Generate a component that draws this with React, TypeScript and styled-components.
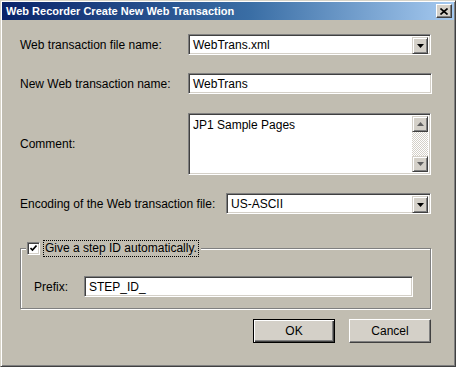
import React from 'react'
import styled, { createGlobalStyle } from 'styled-components'

const Global = createGlobalStyle`
  html, body {
    margin: 0;
    padding: 0;
    background: #c1bdb1;
  }
  * {
    box-sizing: border-box;
  }
`

const Window = styled.div`
  width: 456px;
  height: 367px;
  background: #c1bdb1;
  border: 1px solid;
  border-color: #d8d4c8 #404040 #404040 #d8d4c8;
  box-shadow: inset 1px 1px #ffffff, inset -1px -1px #808080;
  padding: 1px;
  display: flex;
  flex-direction: column;
  font-family: 'Liberation Sans', Arial, sans-serif;
  font-size: 12px;
  color: #000;
`

const TitleBar = styled.div`
  height: 18px;
  display: flex;
  align-items: center;
  justify-content: space-between;
  padding: 0 2px 0 4px;
  background: linear-gradient(to right, #0a246a 0%, #3a6ea5 55%, #a6caf0 100%);
`

const Title = styled.span`
  color: #ffffff;
  font-weight: bold;
  font-size: 11px;
  white-space: nowrap;
`

const CloseButton = styled.div`
  width: 16px;
  height: 14px;
  background: #d4d0c8;
  border: 1px solid;
  border-color: #ffffff #404040 #404040 #ffffff;
  box-shadow: inset -1px -1px #808080;
  display: flex;
  align-items: center;
  justify-content: center;
`

const Body = styled.div`
  flex: 1;
  display: flex;
  flex-direction: column;
  padding: 14px 23px 0 18px;
`

const Row = styled.div<{ $top: number }>`
  display: flex;
  align-items: center;
  margin-top: ${(p) => p.$top}px;
`

const Label = styled.label<{ $width: number }>`
  width: ${(p) => p.$width}px;
  flex-shrink: 0;
  white-space: nowrap;
`

const Sunken = styled.div<{ $height: number }>`
  flex: 1;
  height: ${(p) => p.$height}px;
  background: #ffffff;
  border: 1px solid;
  border-color: #808080 #ffffff #ffffff #808080;
  box-shadow: inset 1px 1px #404040, inset -1px -1px #d4d0c8;
  padding: 2px;
  display: flex;
`

const FieldText = styled.div<{ $top?: number }>`
  flex: 1;
  padding: ${(p) => p.$top ?? 1}px 1px 0 2px;
  white-space: nowrap;
  line-height: 14px;
`

const RaisedButton = styled.div`
  width: 16px;
  height: 17px;
  background: #d4d0c8;
  border: 1px solid;
  border-color: #d4d0c8 #404040 #404040 #d4d0c8;
  box-shadow: inset 1px 1px #ffffff, inset -1px -1px #808080;
  display: flex;
  align-items: center;
  justify-content: center;
`

const ScrollBar = styled.div`
  width: 16px;
  display: flex;
  flex-direction: column;
`

const ScrollTrack = styled.div`
  flex: 1;
  background: repeating-conic-gradient(#ffffff 0 25%, #d4d0c8 0 50%) 0 0 / 2px 2px;
`

const ScrollArrow = styled(RaisedButton)`
  height: 16px;
`

const Group = styled.fieldset`
  margin: 26px 0 0 0;
  min-width: 0;
  border: 1px solid #808080;
  box-shadow: inset 1px 1px #ffffff, 1px 1px #ffffff;
  padding: 19px 17px 11px 13px;
  display: flex;
  align-items: center;
`

const Legend = styled.legend`
  margin-left: -8px;
  padding: 0 2px 0 1px;
  background: #c1bdb1;
  display: flex;
  align-items: center;
  gap: 3px;
`

const CheckBox = styled.div`
  width: 13px;
  height: 13px;
  background: #ffffff;
  border: 1px solid;
  border-color: #808080 #ffffff #ffffff #808080;
  box-shadow: inset 1px 1px #404040, inset -1px -1px #d4d0c8;
  display: flex;
  align-items: center;
  justify-content: center;
`

const FocusLabel = styled.span`
  border: 1px dotted #000;
  padding: 1px 1px 1px 1px;
  line-height: 13px;
  white-space: nowrap;
`

const ButtonRow = styled.div`
  display: flex;
  justify-content: flex-end;
  gap: 14px;
  margin-top: 10px;
`

const PushButton = styled.button<{ $default?: boolean }>`
  width: 82px;
  height: 24px;
  font-family: inherit;
  font-size: 12px;
  color: #000;
  background: #d4d0c8;
  padding: 0;
  border: 1px solid;
  border-color: ${(p) =>
    p.$default ? '#000000' : '#ffffff #404040 #404040 #ffffff'};
  box-shadow: ${(p) =>
    p.$default
      ? 'inset 1px 1px #ffffff, inset -1px -1px #404040, inset -2px -2px #808080'
      : 'inset -1px -1px #808080'};
`

const DownArrow = ({ color = '#000' }: { color?: string }) => (
  <svg width="7" height="4" viewBox="0 0 7 4">
    <path d="M0 0h7L3.5 4z" fill={color} />
  </svg>
)

const UpArrow = ({ color = '#000' }: { color?: string }) => (
  <svg width="7" height="4" viewBox="0 0 7 4">
    <path d="M0 4h7L3.5 0z" fill={color} />
  </svg>
)

const Combo = ({ value }: { value: string }) => (
  <Sunken $height={21}>
    <FieldText>{value}</FieldText>
    <RaisedButton>
      <DownArrow />
    </RaisedButton>
  </Sunken>
)

export default function App() {
  return (
    <>
      <Global />
      <Window>
        <TitleBar>
          <Title>Web Recorder Create New Web Transaction</Title>
          <CloseButton>
            <svg width="8" height="7" viewBox="0 0 8 7">
              <path d="M0.5 0.5l7 6M7.5 0.5l-7 6" stroke="#000" strokeWidth="1.6" />
            </svg>
          </CloseButton>
        </TitleBar>
        <Body>
          <Row $top={0}>
            <Label $width={168}>Web transaction file name:</Label>
            <Combo value="WebTrans.xml" />
          </Row>
          <Row $top={18}>
            <Label $width={168}>New Web transaction name:</Label>
            <Sunken $height={21} style={{ marginRight: -1 }}>
              <FieldText>WebTrans</FieldText>
            </Sunken>
          </Row>
          <Row $top={19}>
            <Label $width={168}>Comment:</Label>
            <Sunken $height={62}>
              <FieldText $top={2}>JP1 Sample Pages</FieldText>
              <ScrollBar>
                <ScrollArrow>
                  <UpArrow color="#606060" />
                </ScrollArrow>
                <ScrollTrack />
                <ScrollArrow>
                  <DownArrow color="#606060" />
                </ScrollArrow>
              </ScrollBar>
            </Sunken>
          </Row>
          <Row $top={18}>
            <Label $width={206}>Encoding of the Web transaction file:</Label>
            <Combo value="US-ASCII" />
          </Row>
          <Group>
            <Legend>
              <CheckBox>
                <svg width="7" height="7" viewBox="0 0 7 7">
                  <path d="M0.5 3l2 2 4-4.5" stroke="#000" strokeWidth="1.6" fill="none" />
                </svg>
              </CheckBox>
              <FocusLabel>Give a step ID automatically.</FocusLabel>
            </Legend>
            <Label $width={50}>Prefix:</Label>
            <Sunken $height={21}>
              <FieldText>STEP_ID_</FieldText>
            </Sunken>
          </Group>
          <ButtonRow>
            <PushButton $default>OK</PushButton>
            <PushButton>Cancel</PushButton>
          </ButtonRow>
        </Body>
      </Window>
    </>
  )
}
